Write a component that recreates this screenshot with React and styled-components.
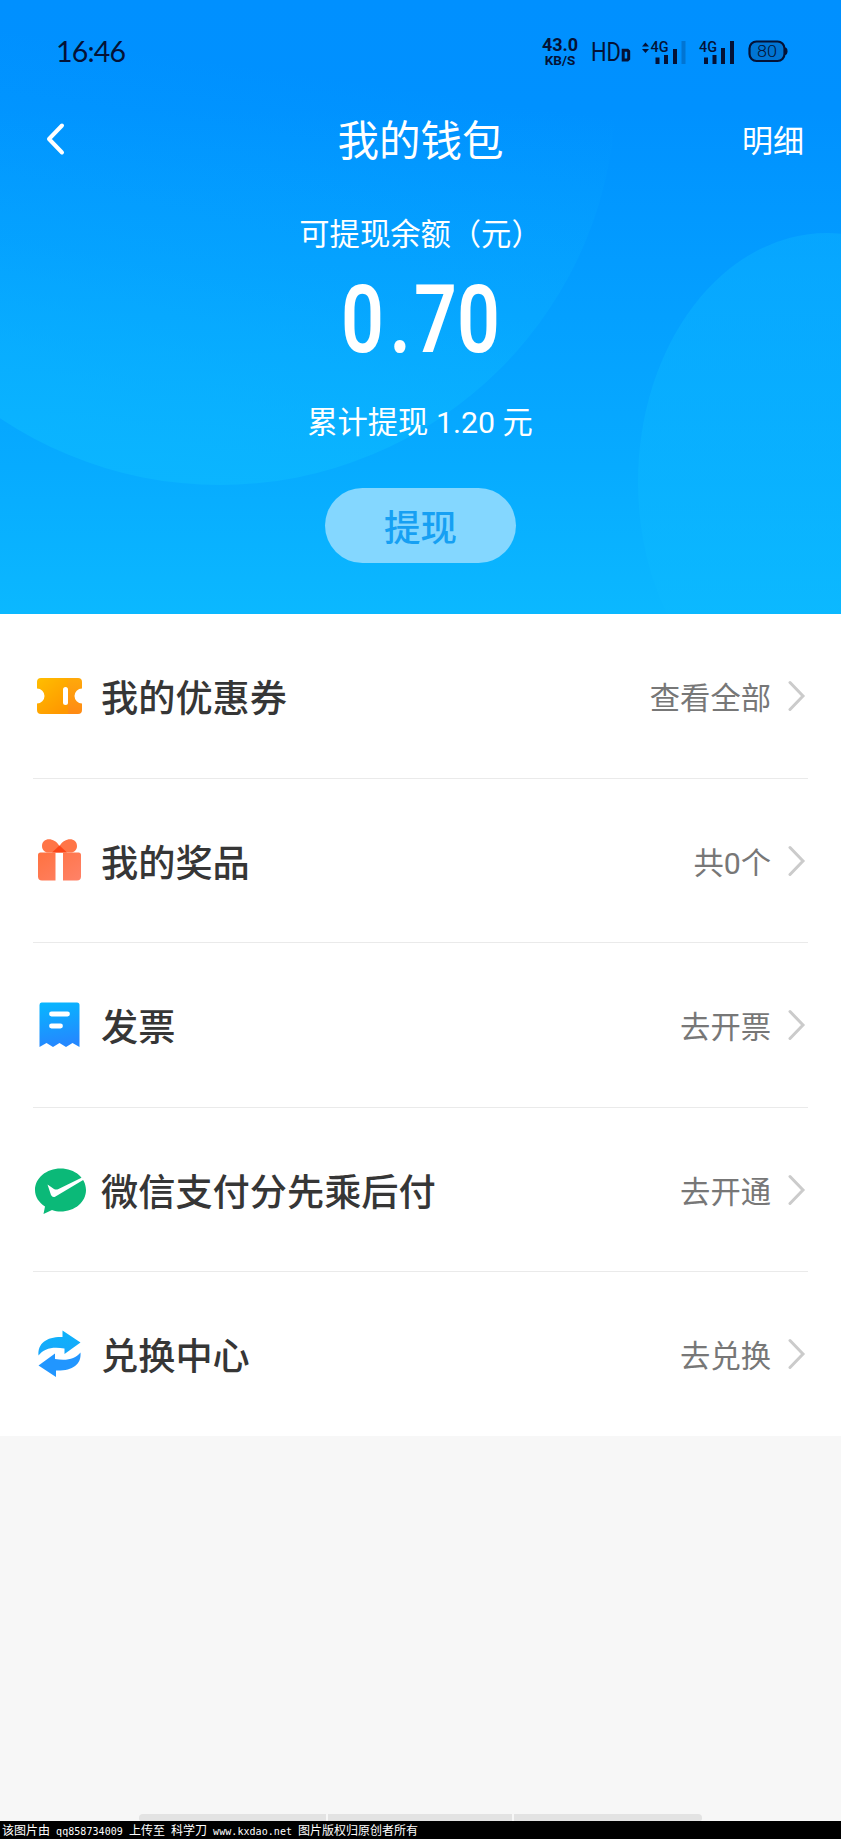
import styled, { createGlobalStyle } from 'styled-components';

const rows = [
    { id: 'coupon', title: '我的优惠券', action: '查看全部', Icon: CouponIcon },
    { id: 'prize', title: '我的奖品', action: '共0个', Icon: GiftIcon },
    { id: 'invoice', title: '发票', action: '去开票', Icon: InvoiceIcon },
    { id: 'wechat', title: '微信支付分先乘后付', action: '去开通', Icon: WechatPayIcon },
    { id: 'exchange', title: '兑换中心', action: '去兑换', Icon: ExchangeIcon },
];

export default function App() {
    return (
        <>
            <GlobalStyle />
            <Page>
                <Header>
                    <HeaderBackground />
                    <StatusBar />
                    <NavBar>
                        <BackIcon />
                        <Title>我的钱包</Title>
                        <DetailLink>明细</DetailLink>
                    </NavBar>
                    <BalanceLabel>可提现余额（元）</BalanceLabel>
                    <Balance><span>0</span><Dot>.</Dot><span>70</span></Balance>
                    <Total>累计提现 1.20 元</Total>
                    <WithdrawButton>提现</WithdrawButton>
                </Header>
                <List>
                    {rows.map((row) => <WalletRow
                        key={row.id}
                        title={row.title}
                        action={row.action}
                        Icon={row.Icon} />)}
                </List>
                <Rest>
                    <BottomBar>
                        <BarPart $width="187px" />
                        <BarPart $width="184px" />
                        <BarPart $width="188px" />
                    </BottomBar>
                </Rest>
                <Watermark>
                    该图片由<Latin> qq858734009 </Latin>上传至<Latin> </Latin>科学刀<Latin> www.kxdao.net </Latin>图片版权归原创者所有
                </Watermark>
            </Page>
        </>
    )
}

function WalletRow({ title, action, Icon }) {
    return (
        <Row>
            <IconBox><Icon /></IconBox>
            <RowTitle>{title}</RowTitle>
            <RowAction>{action}</RowAction>
            <svg width="18" height="32" viewBox="0 0 18 32" fill="none">
                <path d="M2 2.5L15 16L2 29.5" stroke="#cbcbcb" strokeWidth="3" strokeLinecap="round" />
            </svg>
        </Row>
    )
}

function StatusBar() {
    return (
        <Status>
            <Clock>16:46</Clock>
            <Speed>
                <SpeedValue>43.0</SpeedValue>
                <SpeedUnit>KB/S</SpeedUnit>
            </Speed>
            <StatusIcon $left="11px" width="40" height="32" viewBox="0 -3 40 32">
                <text x="0" y="22" fontSize="25" fontWeight="400" textLength="30" lengthAdjust="spacingAndGlyphs">HD</text>
                <path d="M32.2 11.2h4.3l1.2 1.2v7.4l-1.2 1.2h-4.3z" fill="none" stroke="#041236" strokeWidth="3" />
            </StatusIcon>
            <StatusIcon $left="10px" width="45" height="26" viewBox="0 0 45 26">
                <path d="M1 7.5L4.5 3.5L8 7.5zM1 10L4.5 14L8 10z" />
                <text x="9.5" y="12.5" fontSize="15" fontWeight="500" textLength="18" lengthAdjust="spacingAndGlyphs">4G</text>
                <path d="M14.5 18.5h4v6.5h-4zM23 16h4v9h-4zM32 10h4v15h-4z" />
                <path d="M40.5 2h4v23h-4z" opacity="0.22" />
            </StatusIcon>
            <StatusIcon $left="13px" width="36" height="26" viewBox="0 0 36 26">
                <text x="0" y="12.5" fontSize="15" fontWeight="500" textLength="18" lengthAdjust="spacingAndGlyphs">4G</text>
                <path d="M5 18.5h4v6.5h-4zM13.5 16h4v9h-4zM22 9h4v16h-4zM31 2h4v23h-4z" />
            </StatusIcon>
            <StatusIcon $left="13px" width="40" height="26" viewBox="0 0 40 26">
                <rect x="1.5" y="2.5" width="35" height="19.5" rx="7" fill="rgba(4, 18, 54, 0.22)" stroke="#041236" strokeWidth="2.2" />
                <path d="M37 8.5q2.5 0 2.5 3.7t-2.5 3.7z" />
                <text x="9" y="18" fontSize="17" fontWeight="300" textLength="20" lengthAdjust="spacingAndGlyphs">80</text>
            </StatusIcon>
        </Status>
    )
}

function HeaderBackground() {
    return (
        <Backdrop width="841" height="614" viewBox="0 0 841 614">
            <defs>
                <linearGradient id="bigCircle" gradientUnits="userSpaceOnUse" x1="290" y1="70" x2="230" y2="485">
                    <stop offset="0" stopColor="#0cb8ff" stopOpacity="0" />
                    <stop offset="0.5" stopColor="#0cb8ff" stopOpacity="0.25" />
                    <stop offset="1" stopColor="#0cb8ff" stopOpacity="0.75" />
                </linearGradient>
                <linearGradient id="sideCircle" gradientUnits="userSpaceOnUse" x1="0" y1="232" x2="0" y2="614">
                    <stop offset="0" stopColor="#0cb4ff" stopOpacity="0.45" />
                    <stop offset="1" stopColor="#0cb9ff" stopOpacity="0.5" />
                </linearGradient>
            </defs>
            <circle cx="220" cy="89" r="396" fill="url(#bigCircle)" />
            <ellipse cx="827" cy="482" rx="189" ry="249" fill="url(#sideCircle)" />
        </Backdrop>
    )
}

function BackIcon() {
    return (
        <svg width="20" height="34" viewBox="0 0 20 34" fill="none">
            <path d="M17 3.5L4 17L17 30.5" stroke="#fff" strokeWidth="4" strokeLinecap="round" strokeLinejoin="round" />
        </svg>
    )
}

function CouponIcon() {
    return (
        <svg width="52" height="52" viewBox="0 0 52 52">
            <defs>
                <linearGradient id="coupon" x1="0" y1="0" x2="0.7" y2="1">
                    <stop offset="0" stopColor="#ffbe00" />
                    <stop offset="1" stopColor="#ff9800" />
                </linearGradient>
                <linearGradient id="stub" x1="0" y1="0" x2="0" y2="1">
                    <stop offset="0" stopColor="#ffa90a" />
                    <stop offset="1" stopColor="#ff8a14" />
                </linearGradient>
            </defs>
            <path d="M7 8h27v36H7q-4 0-4-4v-6.5a7.5 7.5 0 0 0 0-15V12q0-4 4-4z" fill="url(#coupon)" />
            <path d="M34 8h10q4 0 4 4v6.5a7.5 7.5 0 0 0 0 15V40q0 4-4 4H34z" fill="url(#stub)" />
            <rect x="29" y="17" width="5" height="18" rx="2.5" fill="#fff" />
        </svg>
    )
}

function GiftIcon() {
    return (
        <svg width="52" height="52" viewBox="0 0 52 52">
            <defs>
                <linearGradient id="gift" x1="0" y1="0" x2="1" y2="1">
                    <stop offset="0" stopColor="#ff7240" />
                    <stop offset="1" stopColor="#ff8268" />
                </linearGradient>
            </defs>
            <path d="M25.5 11C20 1.5 8 2.5 8 11c0 4 3 6.5 6 6.5h23c3 0 6-2.5 6-6.5 0-8.5-12-9.5-17.5 0z" fill="#ff7547" />
            <path d="M25.5 10.5l7.5 7H18z" fill="#fb4518" />
            <path d="M6.5 17.5H21.5v28H8q-4 0-4-4V20q0-2.5 2.5-2.5zM29 17.5h15.5q2.5 0 2.5 2.5v21.5q0 4-4 4H29z" fill="url(#gift)" />
        </svg>
    )
}

function InvoiceIcon() {
    return (
        <svg width="52" height="52" viewBox="0 0 52 52">
            <defs>
                <linearGradient id="invoice" x1="0" y1="0" x2="0.15" y2="1">
                    <stop offset="0" stopColor="#06b7ff" />
                    <stop offset="1" stopColor="#2488ff" />
                </linearGradient>
            </defs>
            <path d="M8 3.5h35q2.5 0 2.5 2.5v42l-7-4-6.5 4-6.5-4-6.5 4-6.5-4-7 4V6q0-2.5 2-2.5z" fill="url(#invoice)" />
            <path d="M17.5 15h16M17.5 27h9" stroke="#fff" strokeWidth="4.8" strokeLinecap="round" />
        </svg>
    )
}

function WechatPayIcon() {
    return (
        <svg width="54" height="52" viewBox="0 0 54 52">
            <path d="M26.5 4.5C12.5 4.5 1 14 1 26c0 7 4 12.5 10 16.5l-1.5 7.5 8.5-4c3 1 5.5 1.5 8.5 1.5 14.5 0 25.5-9.5 25.5-21.5 0-12-11-21.5-25.5-21.5z" fill="#0bb978" />
            <path d="M13.5 20.5l6.5 4.5q2 1.2 4.5 0L48 13.5l2 2L21.5 32.5q-3 1.5-4.5-1.5z" fill="#fff" />
        </svg>
    )
}

function ExchangeIcon() {
    return (
        <svg width="52" height="52" viewBox="0 0 52 52">
            <defs>
                <linearGradient id="swapTop" x1="0" y1="0" x2="0" y2="1">
                    <stop offset="0" stopColor="#0db3fa" />
                    <stop offset="1" stopColor="#18a6fb" />
                </linearGradient>
            </defs>
            <path d="M4.5 27.5C3.5 15 13 8.5 28.500 9V2.5L46.5 14.5L30.5 26V20.5C18 18.5 10 20.5 4.5 27.5z" fill="url(#swapTop)" />
            <path d="M46.5 24.5C47.5 37 38 43 22 42.5V49L4.5 37.5L21 25.5V31C33 33 41 31 46.5 24.5z" fill="#2196ff" />
        </svg>
    )
}

const GlobalStyle = createGlobalStyle`
    * {
        box-sizing: border-box;
    }

    body {
        margin: 0;
        background-color: #F7F7F7;
        font-family: Roboto, "Noto Sans CJK SC", sans-serif;
    }

    svg {
        display: block;
        flex-shrink: 0;
    }
`;

const Page = styled.div`
    width: 841px;
    height: 1839px;
    display: flex;
    flex-direction: column;
    overflow: hidden;
`;

const Header = styled.header`
    height: 614px;
    display: flex;
    flex-direction: column;
    align-items: center;
    position: relative;
    isolation: isolate;
    flex-shrink: 0;
    color: #FFFFFF;
    background: linear-gradient(#0090FF 0%, #0091FF 18%, #07ABFF 76%, #0BB8FF 100%);
`;

const Backdrop = styled.svg`
    position: absolute;
    top: 0;
    left: 0;
    z-index: -1;
`;

const Status = styled.div`
    width: 100%;
    height: 104px;
    padding: 0 53px 0 56px;
    display: flex;
    align-items: center;
    color: #041236;
`;

const Clock = styled.div`
    margin: 0 auto 2px 0;
    font-family: Lato, sans-serif;
    font-size: 28.5px;
    line-height: 30px;
    letter-spacing: -0.8px;
`;

const Speed = styled.div`
    width: 40px;
    display: flex;
    flex-direction: column;
    align-items: center;
    font-weight: 700;
`;

const SpeedValue = styled.div`
    font-size: 18px;
    line-height: 16px;
`;

const SpeedUnit = styled.div`
    font-size: 13.5px;
    line-height: 14px;
`;

const StatusIcon = styled.svg`
    margin-left: ${(props) => props.$left};
    overflow: visible;
    fill: #041236;
    font-family: Roboto, sans-serif;
`;

const NavBar = styled.nav`
    width: 100%;
    height: 70px;
    padding: 0 37px 0 45px;
    display: grid;
    grid-template-columns: 84px 1fr 92px;
    align-items: center;
`;

const Title = styled.h1`
    margin: 6px 0 0;
    font-size: 41.5px;
    font-weight: 400;
    line-height: 50px;
    text-align: center;
`;

const DetailLink = styled.div`
    margin-top: 6px;
    font-size: 31px;
    line-height: 40px;
    text-align: right;
`;

const BalanceLabel = styled.div`
    margin-top: 38px;
    font-size: 30.3px;
    line-height: 40px;
    font-family: "Noto Sans CJK SC", sans-serif;
`;

const Balance = styled.div`
    height: 100px;
    margin-top: 18px;
    display: flex;
    font-size: 94px;
    font-weight: 600;
    line-height: 100px;
    transform: scaleX(0.8);
`;

const Dot = styled.span`
    margin: 0 4px 0 7px;
`;

const Total = styled.div`
    margin-top: 33px;
    padding-right: 1px;
    font-size: 30.3px;
    line-height: 40px;
`;

const WithdrawButton = styled.button`
    width: 191px;
    height: 75px;
    margin-top: 45px;
    padding: 0;
    border: none;
    border-radius: 38px;
    background-color: #84D7FF;
    font-family: inherit;
    font-size: 36.5px;
    font-weight: 500;
    color: #16A0F3;
`;

const List = styled.main`
    height: 822px;
    padding: 0 33px;
    display: grid;
    grid-template-rows: 165px 164px 165px 164px 164px;
    flex-shrink: 0;
    background-color: #FFFFFF;
`;

const Row = styled.div`
    padding-right: 2px;
    display: flex;
    align-items: center;
    border-bottom: 1px solid #EAEAEA;

    &:last-of-type {
        border-bottom: none;
    }
`;

const IconBox = styled.div`
    width: 68px;
    display: flex;

    svg {
        margin-left: 1px;
    }
`;

const RowTitle = styled.div`
    flex: 1;
    font-size: 37.2px;
    font-weight: 500;
    color: #363636;
`;

const RowAction = styled.div`
    margin-right: 17px;
    font-size: 30.3px;
    color: #777777;
`;

const Rest = styled.div`
    flex: 1;
    display: flex;
    align-items: flex-end;
    justify-content: center;
    background-color: #F7F7F7;
`;

const BottomBar = styled.div`
    height: 7px;
    display: flex;
    gap: 2px;
    border-radius: 4px 4px 2px 2px;
    overflow: hidden;
`;

const BarPart = styled.div`
    width: ${(props) => props.$width};
    background-color: #E3E3E3;
`;

const Watermark = styled.footer`
    height: 18px;
    padding-left: 2px;
    background-color: #000000;
    font-family: "Noto Sans CJK SC", sans-serif;
    font-size: 12px;
    line-height: 18px;
    white-space: nowrap;
    color: #FFFFFF;
`;

const Latin = styled.span`
    font-family: "DejaVu Sans Mono", monospace;
    font-size: 10px;
    letter-spacing: 0.05px;
    white-space: pre;
`;
